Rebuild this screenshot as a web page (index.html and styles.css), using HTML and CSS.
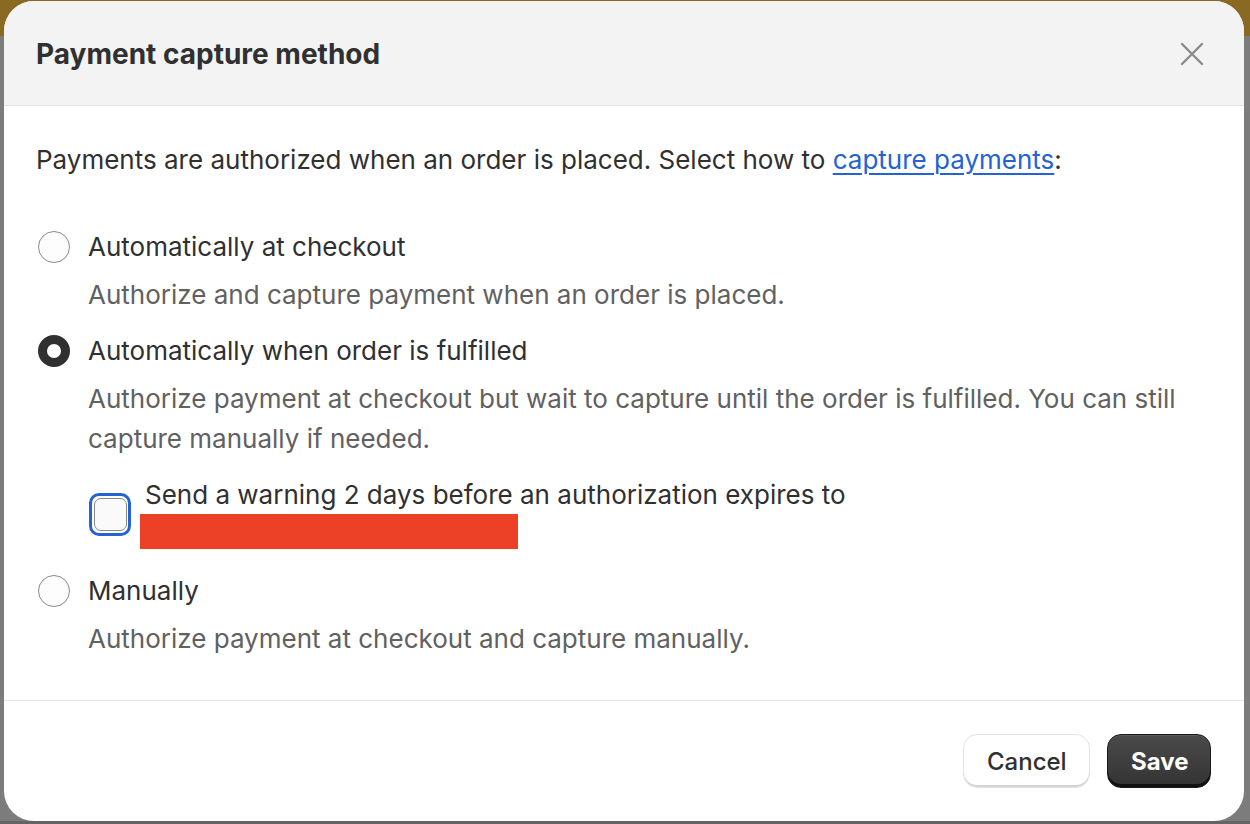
FILE: index.html
```html
<!DOCTYPE html>
<html lang="en">
<head>
<meta charset="utf-8">
<title>Payment capture method</title>
<link rel="stylesheet" href="styles.css">
</head>
<body>
<div class="modal">
  <header class="modal-header">
    <h1 class="modal-title">Payment capture method</h1>
    <button class="close" aria-label="Close">
      <svg width="24" height="24" viewBox="0 0 24 24" fill="none"><path d="M2 2 L22 22 M22 2 L2 22" stroke="#8a8a8a" stroke-width="2.4" stroke-linecap="round"/></svg>
    </button>
  </header>
  <section class="modal-body">
    <p class="intro">Payments are authorized when an order is placed. Select how to <a href="#" class="link">capture payments</a>:</p>
    <div class="options">
      <div class="option">
        <div class="option-row"><span class="radio"></span><span class="label">Automatically at checkout</span></div>
        <p class="desc">Authorize and capture payment when an order is placed.</p>
      </div>
      <div class="option">
        <div class="option-row"><span class="radio checked"></span><span class="label">Automatically when order is fulfilled</span></div>
        <p class="desc">Authorize payment at checkout but wait to capture until the order is fulfilled. You can still capture manually if needed.</p>
        <div class="check-row">
          <span class="checkbox-ring"><span class="checkbox"></span></span>
          <div class="check-label">
            <div>Send a warning 2 days before an authorization expires to</div>
            <div class="redact"></div>
          </div>
        </div>
      </div>
      <div class="option">
        <div class="option-row"><span class="radio"></span><span class="label">Manually</span></div>
        <p class="desc">Authorize payment at checkout and capture manually.</p>
      </div>
    </div>
  </section>
  <footer class="modal-footer">
    <button class="btn btn-secondary">Cancel</button>
    <button class="btn btn-primary">Save</button>
  </footer>
</div>
</body>
</html>
```
FILE: styles.css
```css
html, body {
  margin: 0;
  padding: 0;
}
body {
  width: 1250px;
  height: 824px;
  overflow: hidden;
  background: linear-gradient(to bottom, #8a6a22 0, #8a6a22 36px, #7c7c7c 36px, #7c7c7c 821px, #646464 821px);
  font-family: Inter, "Noto Sans", "Liberation Sans", sans-serif;
  color: #303030;
  box-sizing: border-box;
  padding: 1px 6px 0 4px;
}
.modal {
  width: 1240px;
  height: 820px;
  background: #ffffff;
  border-radius: 30px;
  overflow: hidden;
  display: flex;
  flex-direction: column;
}
.modal-header {
  height: 104px;
  background: #f3f3f3;
  border-bottom: 1px solid #e3e3e3;
  display: flex;
  align-items: center;
  justify-content: space-between;
  padding: 0 40px 0 32px;
  flex-shrink: 0;
}
.modal-title {
  margin: 0;
  font-size: 28px;
  font-weight: 650;
  color: #303030;
  padding-top: 1px;
}
.close {
  border: 0;
  background: none;
  padding: 0;
  width: 24px;
  height: 24px;
  display: flex;
  cursor: pointer;
  margin-top: 2px;
}
.modal-body {
  flex: 1;
  padding: 34px 33px 0 32px;
  font-size: 26px;
  line-height: 40px;
  border-bottom: 1px solid #e3e3e3;
}
.intro {
  margin: 0;
  color: #303030;
}
.link {
  color: #2463d1;
  text-decoration: underline;
  text-underline-offset: 4px;
  text-decoration-thickness: 1.5px;
}
.options {
  margin-top: 47px;
  display: flex;
  flex-direction: column;
  gap: 16px;
}
.option-row {
  display: flex;
  align-items: center;
  gap: 18px;
}
.radio {
  width: 32px;
  height: 32px;
  box-sizing: border-box;
  border-radius: 50%;
  border: 1px solid #8a8a8a;
  background: #fdfdfd;
  margin-left: 2px;
  flex-shrink: 0;
}
.radio.checked {
  border: 9px solid #303030;
  background: #ffffff;
}
.label {
  color: #303030;
}
.desc {
  margin: 8px 0 0 52px;
  color: #616161;
}
.check-row {
  display: flex;
  margin: 17px 0 0 53px;
  gap: 14px;
}
.checkbox-ring {
  width: 42px;
  height: 43px;
  box-sizing: border-box;
  border: 3px solid #2463d1;
  border-radius: 10px;
  display: flex;
  align-items: center;
  justify-content: center;
  margin-top: 17px;
  flex-shrink: 0;
}
.checkbox {
  width: 33px;
  height: 33px;
  box-sizing: border-box;
  border: 1.5px solid #8a8a8a;
  border-radius: 7px;
  background: #fafafa;
}
.check-label {
  line-height: 38px;
  color: #303030;
}
.redact {
  width: 378px;
  height: 35px;
  margin-left: -5px;
  background: #ec4027;
}
.options .option:last-child {
  margin-top: 6px;
}
.modal-footer {
  height: 120px;
  flex-shrink: 0;
  display: flex;
  justify-content: flex-end;
  align-items: center;
  gap: 17px;
  padding: 0 33px 0 0;
}
.btn {
  height: 54px;
  border-radius: 14px;
  font-family: Inter, "Noto Sans", "Liberation Sans", sans-serif;
  font-size: 24px;
  font-weight: 550;
  padding: 0 23px;
  cursor: pointer;
}
.btn-secondary {
  width: 127px;
  background: #ffffff;
  color: #303030;
  border: 1.5px solid #e3e3e3;
  box-shadow: inset 0 -2px 0 #d4d4d4;
}
.btn-primary {
  width: 104px;
  background: linear-gradient(to bottom, #4a4a4a, #333333);
  color: #ffffff;
  border: 1.5px solid #1a1a1a;
  box-shadow: inset 0 -3px 0 #111111, inset 0 1px 0 #5a5a5a;
  font-weight: 650;
}
```
